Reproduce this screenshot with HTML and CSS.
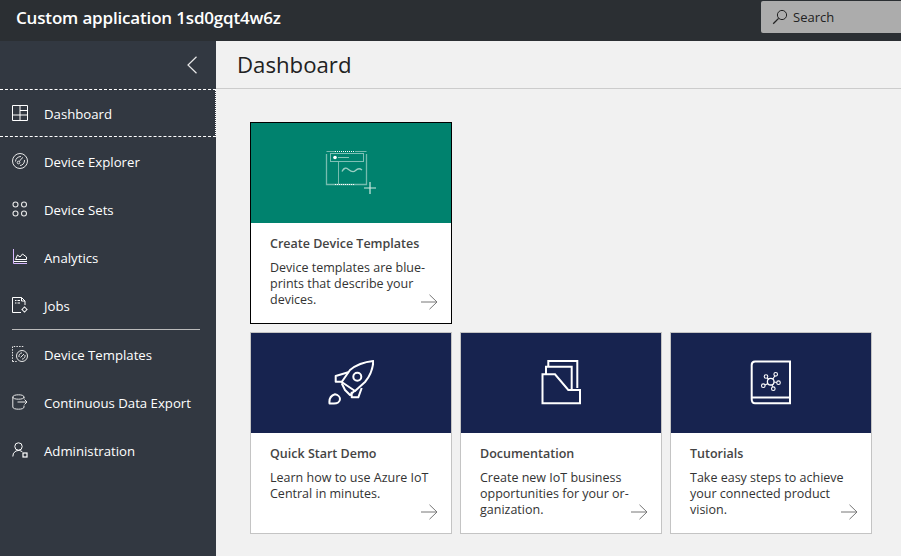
FILE: index.html
```html
<!DOCTYPE html>
<html lang="en">
<head>
<meta charset="utf-8">
<title>Custom application</title>
<link rel="stylesheet" href="styles.css">
</head>
<body>
<header class="topbar">
  <div class="app-name">Custom application 1sd0gqt4w6z</div>
  <div class="search">
    <svg class="search-icon" width="16" height="16" viewBox="0 0 16 16" fill="none" stroke="#222" stroke-width="1"><circle cx="10" cy="6" r="4.6"/><path d="M6.6 9.4 1.2 14.8" stroke-width="1.3"/></svg>
    <span>Search</span>
  </div>
</header>
<div class="shell">
  <nav class="sidebar">
    <div class="collapse-row">
      <svg width="12" height="18" viewBox="0 0 12 18" fill="none" stroke="#e8e8e8" stroke-width="1.2"><path d="M10.5 .8 2 9l8.5 8.200"/></svg>
    </div>
    <a class="nav-item active">
      <svg class="nav-icon" width="16" height="16" viewBox="0 0 16 16" fill="none" stroke="#fff"><path d="M.5.5h15v15H.5zM8 .5v15M8 5.500h7.500M.5 10h15"/></svg>
      <span>Dashboard</span>
    </a>
    <a class="nav-item">
      <svg class="nav-icon" width="16" height="16" viewBox="0 0 16 16" fill="none" stroke="#e6e6e6"><circle cx="8" cy="8" r="7.500"/><path d="M3.500 8.500C3.500 5.500 6 3.500 9 3.500M12.500 7C12.800 10 10.500 12.500 8 12.500"/><circle cx="6.500" cy="9.500" r="1.300"/><path d="M7.500 8.500c1-2 2-3 3.500-4"/></svg>
      <span>Device Explorer</span>
    </a>
    <a class="nav-item">
      <svg class="nav-icon" width="16" height="16" viewBox="0 0 16 16" fill="none" stroke="#e6e6e6" stroke-width="1.100"><circle cx="3.500" cy="3.500" r="2.500"/><circle cx="12" cy="3.500" r="2.500"/><circle cx="3.500" cy="12.500" r="2.500"/><circle cx="12" cy="12.500" r="2.500"/></svg>
      <span>Device Sets</span>
    </a>
    <a class="nav-item">
      <svg class="nav-icon" width="16" height="16" viewBox="0 0 16 16" fill="none" stroke="#fff"><path d="M1.500 0v14.500H15" stroke="#d8b8ff"/><path d="M2 12.500h13M3.500 10.500l2-4.500 2.500 2 2.500-3 4 3v2.500H4z"/></svg>
      <span>Analytics</span>
    </a>
    <a class="nav-item">
      <svg class="nav-icon" width="16" height="16" viewBox="0 0 16 16" fill="none" stroke="#fff"><path d="M9 15.500H.5V.5h9l3.500 3.500v4M9.500.5V4H13M3 3.500h1.500M5.500 3.500H8M3 6h1.500M5.500 6H8"/><circle cx="12.500" cy="12.500" r="2"/><path d="M12.500 9.500v1M12.500 14.500v1M9.500 12.500h1M14.500 12.500h1" stroke-width="1.200"/></svg>
      <span>Jobs</span>
    </a>
    <div class="nav-divider"></div>
    <a class="nav-item">
      <svg class="nav-icon" width="16" height="16" viewBox="0 0 16 16" fill="none" stroke="#e6e6e6"><path d="M.5 15.500V.5H11.500" stroke-dasharray="1.500 1.200"/><path d="M.5 15.500H5" stroke-dasharray="1.500 1.200"/><circle cx="10" cy="10" r="5.500"/><path d="M7 11a3.500 3.500 0 0 1 3-4.200M13 9a3.500 3.500 0 0 1-3 4.200M8.500 11.500 12 8"/></svg>
      <span>Device Templates</span>
    </a>
    <a class="nav-item">
      <svg class="nav-icon" width="16" height="16" viewBox="0 0 16 16" fill="none" stroke="#e6e6e6"><path d="M12 4.500V3C12 1.500 9.500.8 6.500.8S.8 1.500.8 3v10c0 1.500 2.500 2.200 5.700 2.200s5.500-.7 5.500-2.200v-1.500M.8 3c0 1.500 2.500 2.200 5.700 2.200S12 4.500 12 3M5.500 8H15M12.500 5.500 15 8l-2.500 2.500"/></svg>
      <span>Continuous Data Export</span>
    </a>
    <a class="nav-item">
      <svg class="nav-icon" width="16" height="16" viewBox="0 0 16 16" fill="none" stroke="#fff"><circle cx="6.500" cy="4.500" r="3.700"/><path d="M.8 14.500a5.800 5.800 0 0 1 9.500-4.800"/><rect x="11" y="11" width="4" height="4" stroke-width="1.200"/></svg>
      <span>Administration</span>
    </a>
  </nav>
  <main class="content">
    <h1 class="page-title">Dashboard</h1>
    <section class="cards">
      <article class="card card-selected">
        <div class="card-art teal">
          <svg width="52" height="44" viewBox="0 0 52 44" fill="none" stroke="#b5dcd2"><path d="M1.500 3V33.500H41.500V3" opacity=".65" stroke-width="1.300"/><path d="M1.500 .5H10M30 .5H41.500" opacity=".65"/><path d="M10 .5H30M10 33.500H30" stroke="#fff" stroke-dasharray="1 1"/><rect x="5.500" y="2.500" width="33" height="8" stroke="#fff" stroke-dasharray="1 1"/><circle cx="10" cy="6.500" r="1.800" fill="#fff" stroke="none"/><path d="M13 6.500h11" opacity=".75"/><path d="M13.500 11V33" opacity=".65"/><path d="M17 20.500c2-4 4-4 6.500-2s5 3 7 1 4-2.500 6.500-.5" stroke-width="1.300" opacity=".85"/><path d="M45 31v12M39 37h12" stroke="#cfe9e2" stroke-width="1.200"/></svg>
        </div>
        <div class="card-body">
          <h2>Create Device Templates</h2>
          <p>Device templates are blue-<br>prints that describe your<br>devices.</p>
          <svg class="arrow" width="17" height="16" viewBox="0 0 17 16" fill="none" stroke="#777"><path d="M0 8h16M8.500.8 16 8l-7.500 7.200"/></svg>
        </div>
      </article>
      <article class="card card-wide-start">
        <div class="card-art navy">
          <svg width="46" height="46" viewBox="0 0 46 46" fill="none" stroke="#fff" stroke-width="2" stroke-linejoin="round"><path d="M45.300 1C36 2 28 5 22 10L13.700 22 27 31l10-9c5-6 8-13 8.300-21z"/><circle cx="29.300" cy="16.700" r="4"/><path d="M20.300 12.300 7.700 16v5.700h6M33.700 28 30.300 37.300H23.700V31.700M13.700 23.300 17 30l5 5 5-4.500"/><path d="M1.500 43.500C1 39 3 35.500 7 34.300 10 34.800 12 37 12 39 12 42 9 43.500 6 43.500z"/></svg>
        </div>
        <div class="card-body">
          <h2>Quick Start Demo</h2>
          <p>Learn how to use Azure IoT<br>Central in minutes.</p>
          <svg class="arrow" width="17" height="16" viewBox="0 0 17 16" fill="none" stroke="#777"><path d="M0 8h16M8.500.8 16 8l-7.500 7.200"/></svg>
        </div>
      </article>
      <article class="card">
        <div class="card-art navy">
          <svg width="40" height="46" viewBox="0 -1 40 46" fill="none" stroke="#fff" stroke-width="2"><path d="M1.500 13.300H14L27.300 29H39V42.300H1.500zM5 13V5.700H30.700V29M7.300 5.500V0H36.300V27"/></svg>
        </div>
        <div class="card-body">
          <h2>Documentation</h2>
          <p>Create new IoT business<br>opportunities for your or-<br>ganization.</p>
          <svg class="arrow" width="17" height="16" viewBox="0 0 17 16" fill="none" stroke="#777"><path d="M0 8h16M8.500.8 16 8l-7.500 7.200"/></svg>
        </div>
      </article>
      <article class="card">
        <div class="card-art navy">
          <svg width="42" height="46" viewBox="0 -1 42 46" fill="none" stroke="#fff"><path d="M40 .5V42.300H5C2.500 42.300 1.700 40.500 1.700 38V4C1.700 2 3 .5 5 .5zM2 36.500H40" stroke-width="2"/><circle cx="20.700" cy="20.700" r="3.300" stroke-width="1.300"/><g stroke-width="1.100"><circle cx="16" cy="15.500" r="1.800"/><circle cx="25.700" cy="13.300" r="1.800"/><circle cx="28.500" cy="21.700" r="1.800"/><circle cx="23.300" cy="27.700" r="1.800"/><circle cx="13.300" cy="24.700" r="1.800"/><path d="M17.200 17l1.500 1.500M24.800 15l-2 3M26.700 21.500l-2.700-.5M22.800 25.800 22 24M15 24l3-1.500"/></g></svg>
        </div>
        <div class="card-body">
          <h2>Tutorials</h2>
          <p>Take easy steps to achieve<br>your connected product<br>vision.</p>
          <svg class="arrow" width="17" height="16" viewBox="0 0 17 16" fill="none" stroke="#777"><path d="M0 8h16M8.500.8 16 8l-7.500 7.200"/></svg>
        </div>
      </article>
    </section>
  </main>
</div>
</body>
</html>
```
FILE: styles.css
```css
* { box-sizing: border-box; }
html, body { margin: 0; height: 100%; overflow: hidden; }
body {
  font-family: "Open Sans", "Noto Sans", "Liberation Sans", sans-serif;
  font-size: 13px;
  background: #f1f1f1;
  color: #333;
  display: flex;
  flex-direction: column;
}
.topbar {
  height: 41px;
  flex: none;
  background: #2b2f33;
  display: flex;
  align-items: center;
  justify-content: space-between;
  padding-left: 16px;
}
.app-name {
  color: #fff;
  font-size: 17px;
  font-weight: 600;
  letter-spacing: -0.17px;
  margin-top: -7px;
}
.search {
  width: 140px;
  height: 32px;
  margin-top: -8px;
  background: #acacac;
  border-radius: 2px 0 0 2px;
  display: flex;
  align-items: center;
  padding-left: 11px;
  gap: 5px;
  color: #222;
}
.shell { flex: 1; display: flex; min-height: 0; }
.sidebar {
  width: 216px;
  flex: none;
  background: #323841;
  color: #fff;
  display: flex;
  flex-direction: column;
}
.collapse-row {
  height: 48px;
  display: flex;
  align-items: center;
  justify-content: flex-end;
  padding: 0 18px 0 0;
}
.nav-item {
  height: 48px;
  display: flex;
  align-items: center;
  padding-left: 12px;
  gap: 16px;
  color: #fff;
  font-size: 13.2px;
}
.nav-item span { margin-top: 2px; }
.nav-icon { flex: none; }
.nav-item.active {
  border-top: 1px dashed #fff;
  border-bottom: 1px dashed #fff;
  border-right: 1px dotted #fff;
}
.nav-divider {
  height: 1px;
  background: #bbb;
  margin: 0 16px 0 12px;
}
.content { flex: 1; min-width: 0; }
.page-title {
  margin: 0;
  height: 48px;
  padding-left: 21px;
  font-size: 22.2px;
  font-weight: 400;
  line-height: 47px;
  color: #222;
  border-bottom: 1px solid #ccc;
}
.cards {
  display: grid;
  grid-template-columns: repeat(3, 202px);
  gap: 8px;
  padding: 33px 0 0 34px;
}
.card-wide-start { grid-column: 1; }
.card {
  height: 202px;
  background: #fff;
  border: 1px solid #c4c4c4;
  display: flex;
  flex-direction: column;
}
.card-selected { grid-column: 1 / span 1; grid-row: 1; border-color: #000; }
.card-art {
  height: 100px;
  flex: none;
  display: flex;
  align-items: center;
  justify-content: center;
}
.teal { background: #00826e; }
.navy { background: #17234f; }
.card-body { position: relative; flex: 1; padding: 12px 19px 0; }
.card-body h2 {
  margin: 0 0 7px;
  font-size: 12.5px;
  line-height: 18px;
  font-weight: 600;
  color: #444;
}
.card-body p {
  margin: 0;
  font-size: 12.5px;
  line-height: 16px;
  color: #333;
}
.arrow { position: absolute; right: 13px; bottom: 13px; }
```
